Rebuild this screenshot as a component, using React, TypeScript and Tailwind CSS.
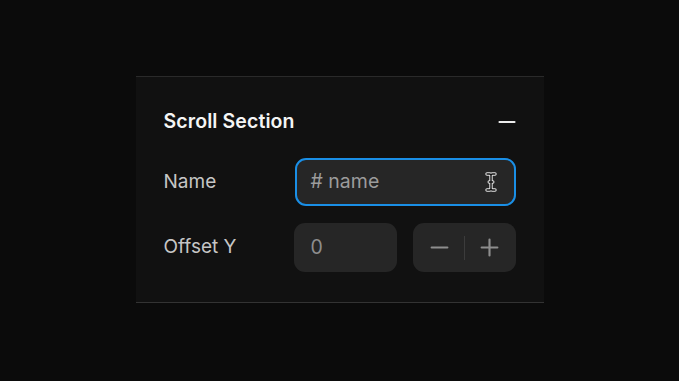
import { Minus, Plus } from "lucide-react";

const beam =
  "M2 2h2.5c.9 0 1.5.6 1.5 1.5 0-.9.6-1.5 1.5-1.5H10M2 18h2.5c.9 0 1.5-.6 1.5-1.5 0 .9.6 1.5 1.5 1.5H10M6 3.5v13M4.2 10h3.6";

function TextCursor() {
  return (
    <svg width="12" height="20" viewBox="0 0 12 20" fill="none" className="shrink-0">
      <path d={beam} stroke="#e6e6e6" strokeWidth="3.4" strokeLinecap="round" strokeLinejoin="round" />
      <path d={beam} stroke="#111111" strokeWidth="1.4" strokeLinecap="round" strokeLinejoin="round" />
    </svg>
  );
}

export default function App() {
  return (
    <div className="flex h-[381px] w-[679px] items-start justify-center bg-[#0b0b0b] pt-[76px] font-['Inter',sans-serif]">
      <div className="w-[408px] border-y border-t-[#2a2a2a] border-b-[#333333] bg-[#111111] px-7 pb-[30px] pt-[31px]">
        <div className="flex h-7 items-center justify-between">
          <h2 className="text-[19.5px] font-semibold tracking-[0.1px] text-[#f5f5f5]">Scroll Section</h2>
          <Minus size={26} strokeWidth={1.8} className="mr-[-4px] text-[#ececec]" />
        </div>

        <div className="mt-[22px] flex flex-col gap-[17px]">
          <div className="flex items-center">
            <span className="w-[131px] shrink-0 text-[19px] text-[#c6c6c6]">Name</span>
            <div className="flex h-[48px] flex-1 items-center justify-between rounded-[11px] border-2 border-[#1a8fe6] bg-[#262626] pl-[14px] pr-[17px]">
              <span className="text-[19.5px] text-[#9c9c9c]"># name</span>
              <TextCursor />
            </div>
          </div>

          <div className="flex items-center">
            <span className="w-[130px] shrink-0 text-[19px] text-[#c6c6c6]">Offset Y</span>
            <div className="grid flex-1 grid-cols-2 gap-4">
              <div className="flex h-[49px] items-center rounded-[11px] bg-[#262626] pl-[17px] text-[19.5px] text-[#8e8e8e]">
                0
              </div>
              <div className="flex h-[49px] items-center justify-center rounded-[11px] bg-[#262626] text-[#8e8e8e]">
                <Minus size={27} strokeWidth={1.9} className="-mr-[4px]" />
                <span className="mx-[15px] h-6 w-px bg-[#3c3c3c]" />
                <Plus size={27} strokeWidth={1.9} className="-ml-[4px]" />
              </div>
            </div>
          </div>
        </div>
      </div>
    </div>
  );
}
